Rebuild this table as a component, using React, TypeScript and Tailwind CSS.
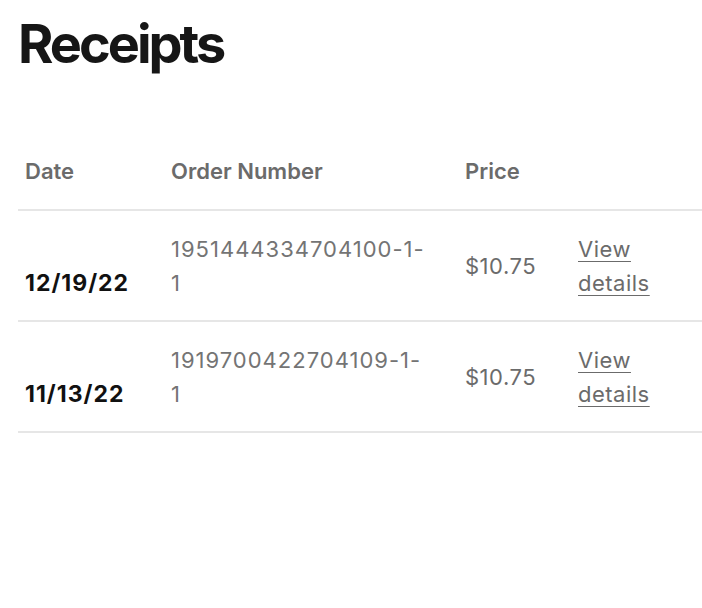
import React from "react";

const rows = [
  { date: "12/19/22", order: "1951444334704100-1-1", price: "$10.75" },
  { date: "11/13/22", order: "1919700422704109-1-1", price: "$10.75" },
];

export default function App() {
  return (
    <div className="min-h-[608px] w-[702px] bg-white pl-[18px]" style={{ fontFamily: "Inter, 'Noto Sans', sans-serif" }}>
      <h1 className="pt-[10px] text-[54px] font-bold leading-[67px] tracking-[-3px] text-[#161616]">Receipts</h1>
      <div className="mt-[55px]">
        <div className="grid grid-cols-[146px_294px_113px_131px] border-b-2 border-[#e6e6e6] pt-[22px] pb-[21px] text-[22px] font-semibold leading-[34px] text-[#6b6b6b]">
          <div className="px-[7px]">Date</div>
          <div className="px-[7px]">Order Number</div>
          <div className="px-[7px]">Price</div>
          <div className="px-[7px]"></div>
        </div>
        {rows.map((r) => (
          <div key={r.date} className="grid grid-cols-[146px_294px_113px_131px] border-b-2 border-[#e6e6e6] pt-[21px] pb-[20px] text-[22px] leading-[34px]">
            <div className="flex items-end px-[7px] text-[23px] font-bold tracking-[1px] text-[#111]">{r.date}</div>
            <div className="pl-[7px] pr-[30px] tracking-[1px] text-[#747474]">{r.order}</div>
            <div className="flex items-center px-[7px] tracking-[0.5px] text-[#6b6b6b]">{r.price}</div>
            <div className="px-[7px] pr-[40px] tracking-[0.5px]">
              <a className="text-[#6b6b6b] underline decoration-1 underline-offset-4">View details</a>
            </div>
          </div>
        ))}
      </div>
    </div>
  );
}
